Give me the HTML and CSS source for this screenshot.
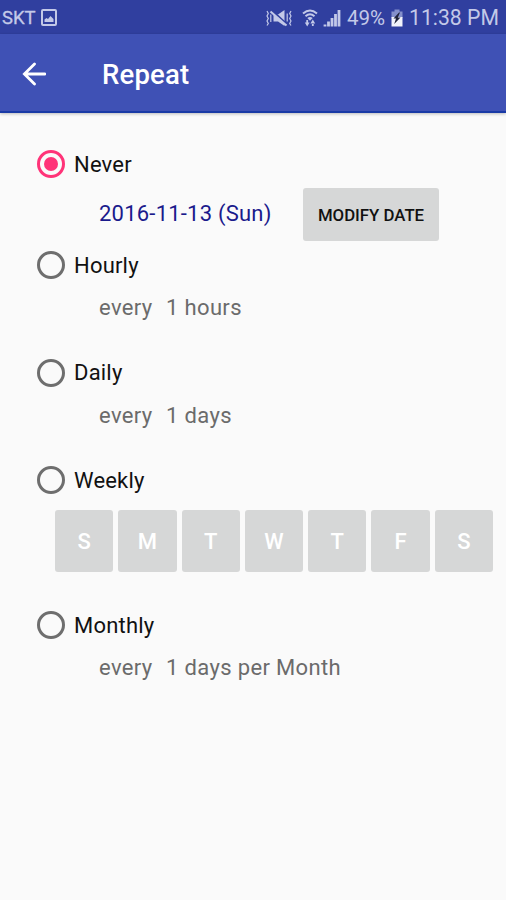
FILE: index.html
```html
<!DOCTYPE html>
<html lang="en">
<head>
    <meta charset="UTF-8">
    <meta name="viewport" content="width=device-width, initial-scale=1.0">
    <title>Repeat</title>
    <link rel="stylesheet" href="styles.css">
</head>
<body>

    <div class="status-bar">
        <span class="carrier">SKT</span>
        <svg class="icon-picture" width="16" height="17" viewBox="0 0 16 17">
            <rect x="1" y="1" width="14" height="15" rx="1" fill="none" stroke="currentColor" stroke-width="2"/>
            <path d="M3.5 13V10.5L5.5 9L7 10L9.5 7L12.5 10V13Z" fill="currentColor"/>
        </svg>

        <div class="status-right">
            <svg class="icon-mute" width="26" height="18" viewBox="0 0 26 18">
                <path d="M7.5 5.5H12L18.5 1V17L12 12.5H7.5Z" fill="currentColor"/>
                <path d="M5.5 1L20 14.5" stroke="#303f9f" stroke-width="2"/>
                <path d="M4.5 2.5L20.5 16.5" stroke="currentColor" stroke-width="2"/>
                <path d="M1 2L2.3 4.5L1 7L2.3 9.5L1 12L2.3 14.5L1 16.5M4.8 5.5V13M25 2L23.7 4.5L25 7L23.7 9.5L25 12L23.7 14.5L25 16.5M21.2 4.5V12.5" fill="none" stroke="currentColor" stroke-width="1.2"/>
            </svg>
            <svg class="icon-wifi" width="16" height="18" viewBox="0 0 16 18">
                <path d="M1 4.5Q8 -1.5 15 4.5M3.5 7.2Q8 3.2 12.5 7.2" fill="none" stroke="currentColor" stroke-width="2"/>
                <path d="M5.3 9Q8 6.8 10.7 9L8 11.8Z" fill="currentColor"/>
                <path d="M2.8 13.5H7.6L5.2 17.5ZM4.3 11H6.1V14H4.3ZM8.4 14.5H13.2L10.8 10.5ZM9.9 14H11.7V17H9.9Z" fill="currentColor"/>
            </svg>
            <svg class="icon-signal" width="18" height="18" viewBox="0 0 18 18">
                <path d="M0.6 15.5H3.4V17.5H0.6ZM4.1 12.5H6.9V17.5H4.1ZM7.6 9H10.4V17.5H7.6ZM11.1 5H13.9V17.5H11.1ZM14.6 1H17.4V17.5H14.6Z" fill="currentColor"/>
            </svg>
            <span class="percent">49%</span>
            <svg class="icon-battery" width="12" height="18" viewBox="0 0 12 18">
                <path d="M3.5 0.5H8.5V2.5H11.5V9H0.5V2.5H3.5Z" fill="#8490cb"/>
                <path d="M0.5 8H11.5V17.5H0.5Z" fill="#f1f3fb"/>
                <path d="M8 3.5L2.5 9.5H5L3.2 15L9.5 8.5H6.8L9 3.5Z" fill="#20243c"/>
            </svg>
            <span class="clock">11:38 PM</span>
        </div>
    </div>

    <div class="app-bar">
        <svg class="back" width="24" height="24" viewBox="0 0 24 24">
            <path d="M23 12H2.5M12.5 2L2.4 12L12.5 22" fill="none" stroke="#fff" stroke-width="2.8" stroke-linecap="round"/>
        </svg>
        <h1>Repeat</h1>
    </div>

    <div class="options">
        <div class="option never">
            <label class="option-label"><span class="radio checked"></span><span>Never</span></label>
            <div class="detail">
                <span class="date">2016-11-13 (Sun)</span>
                <button class="modify">MODIFY DATE</button>
            </div>
        </div>

        <div class="option">
            <label class="option-label"><span class="radio"></span><span>Hourly</span></label>
            <div class="detail"><span class="every">every</span><span>1 hours</span></div>
        </div>

        <div class="option">
            <label class="option-label"><span class="radio"></span><span>Daily</span></label>
            <div class="detail"><span class="every">every</span><span>1 days</span></div>
        </div>

        <div class="option weekly">
            <label class="option-label"><span class="radio"></span><span>Weekly</span></label>
            <div class="days">
                <button class="day">S</button>
                <button class="day">M</button>
                <button class="day">T</button>
                <button class="day">W</button>
                <button class="day">T</button>
                <button class="day">F</button>
                <button class="day">S</button>
            </div>
        </div>

        <div class="option">
            <label class="option-label"><span class="radio"></span><span>Monthly</span></label>
            <div class="detail"><span class="every">every</span><span>1 days per Month</span></div>
        </div>
    </div>

</body>
</html>
```

FILE: styles.css
```css
:root {
    --primary: #3f51b5;
    --primary-dark: #303f9f;
    --accent: #ff3378;
    --button: #d6d7d7;
    --status-text: #c3c9e8;
}

* {
    box-sizing: border-box;
}

body {
    margin: 0;
    height: 100vh;
    background: #fafafa;
    font-family: Roboto, sans-serif;
    font-size: 22px;
    letter-spacing: 0.2px;
    color: #111;
    overflow: hidden;
}

.status-bar {
    display: flex;
    align-items: center;
    height: 34px;
    padding: 1px 7px 0 2px;
    background: var(--primary-dark);
    color: var(--status-text);
    font-size: 20px;
    letter-spacing: 0;
    white-space: nowrap;
}

.carrier {
    width: 39px;
    font-size: 18.5px;
    -webkit-text-stroke: 0.3px currentColor;
}

.status-right {
    display: flex;
    align-items: center;
    margin-left: auto;
}

.icon-mute {
    margin-right: 1px;
}

.icon-wifi {
    margin-left: 9px;
}

.icon-signal {
    margin-left: 5px;
}

.percent {
    width: 39px;
    margin-left: 6px;
    font-size: 20.5px;
}

.icon-battery {
    margin-left: 5px;
}

.clock {
    width: 90px;
    margin-left: 6px;
    font-size: 21.2px;
}

.app-bar {
    display: flex;
    align-items: center;
    height: 79px;
    padding: 3px 22px 0;
    background: var(--primary);
    border-bottom: 2px solid #1a3aa6;
    box-shadow: 0 1px 3px rgba(0, 0, 0, 0.25);
}

h1 {
    margin: 0 0 0 56px;
    font-size: 27.5px;
    font-weight: 500;
    color: #fff;
}

.options {
    padding: 31px 13px 0 37px;
}

.option {
    height: 107.5px;
}

.option.never {
    height: 101px;
}

.option.weekly {
    height: 145px;
}

.option-label {
    display: flex;
    align-items: center;
    gap: 9px;
    height: 40px;
}

.radio {
    display: flex;
    align-items: center;
    justify-content: center;
    width: 28px;
    height: 28px;
    border: 3px solid #6e6e6e;
    border-radius: 50%;
}

.radio.checked {
    border-color: var(--accent);
}

.radio.checked::after {
    content: "";
    width: 14px;
    height: 14px;
    border-radius: 50%;
    background: var(--accent);
}

.detail {
    display: flex;
    align-items: center;
    height: 45px;
    padding-left: 62px;
    letter-spacing: 0.35px;
    color: #6b6b6b;
}

.never .detail {
    height: 53px;
    margin-top: 4px;
    letter-spacing: 0.22px;
}

.every {
    width: 67px;
}

.date {
    width: 204px;
    padding-bottom: 3px;
    color: #1a1a8c;
}

.modify {
    width: 136px;
    height: 53px;
    padding: 0;
    border: none;
    border-radius: 3px;
    background: var(--button);
    font: 500 16.8px Roboto, sans-serif;
    color: #111;
}

.days {
    display: flex;
    gap: 5px;
    margin: 10px 0 0 18px;
}

.day {
    flex: 1;
    height: 62px;
    padding: 0;
    border: none;
    border-radius: 3px;
    background: var(--button);
    font: 500 22px Roboto, sans-serif;
    color: #fff;
}
```
